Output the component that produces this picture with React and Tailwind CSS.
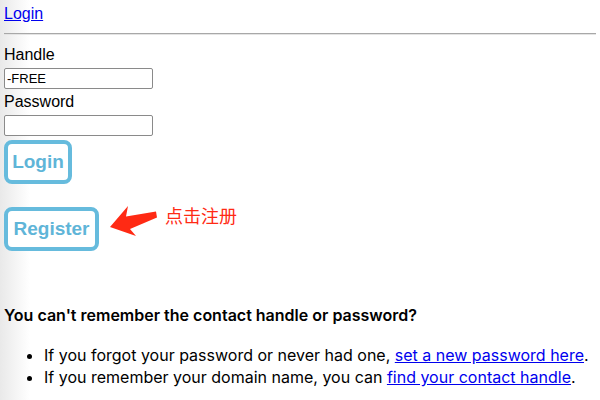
export default function App() {
  return (
    <div className="min-h-screen bg-[linear-gradient(to_right,#e9e9e9,#ffffff_30px)] px-1 pt-1 text-black font-['Liberation_Sans','Noto_Sans_CJK_SC',sans-serif]">
      <a href="#" className="block w-fit text-[16px] leading-[20px] text-[#0000ee] underline">
        Login
      </a>
      <div className="mt-[9px] border-t border-[#a8a8a8] border-b border-b-[#e4e4e4]" />

      <form className="flex flex-col items-start">
        <label className="mt-[11px] text-[16px] leading-[18px]">Handle</label>
        <input
          defaultValue="-FREE"
          className="mt-[4px] h-[21px] w-[149px] rounded-[2px] border border-[#8a8a8a] bg-white px-[2px] text-[13px] leading-[19px] outline-none"
        />
        <label className="mt-[4px] text-[16px] leading-[18px]">Password</label>
        <input
          type="password"
          className="mt-[4px] h-[21px] w-[149px] rounded-[2px] border border-[#8a8a8a] bg-white px-[2px] text-[13px] outline-none"
        />
        <button
          type="button"
          className="mt-[4px] h-[44px] w-[68px] rounded-[8px] border-[4px] border-[#66bbdd] bg-white text-[19px] font-bold text-[#5fb5d8]"
        >
          Login
        </button>

        <div className="relative mt-[23px]">
          <button
            type="button"
            className="h-[44px] w-[95px] rounded-[8px] border-[4px] border-[#66bbdd] bg-white text-[19px] font-bold text-[#5fb5d8]"
          >
            Register
          </button>
          <svg
            className="absolute left-[100px] top-[-4px]"
            width="56"
            height="36"
            viewBox="100 203 56 36"
          >
            <polygon
              points="106,227 124,206 122,216.5 152,211.5 153,217.5 126,229 132,236"
              fill="#ff2a14"
            />
          </svg>
          <span className="absolute left-[161px] top-[-1px] whitespace-nowrap text-[18px] leading-[22px] text-[#ff2a14]">
            点击注册
          </span>
        </div>
      </form>

      <div className="font-['Inter','Noto_Sans_CJK_SC',sans-serif]">
        <h3 className="mt-[54px] text-[16px] font-semibold leading-[20px]">
          You can't remember the contact handle or password?
        </h3>
        <ul className="mt-[19px] list-disc pl-[40px] text-[16px] leading-[22px]">
          <li>
            If you forgot your password or never had one,{' '}
            <a href="#" className="text-[#0000ee] underline">set a new password here</a>.
          </li>
          <li>
            If you remember your domain name, you can{' '}
            <a href="#" className="text-[#0000ee] underline">find your contact handle</a>.
          </li>
        </ul>
      </div>
    </div>
  )
}
